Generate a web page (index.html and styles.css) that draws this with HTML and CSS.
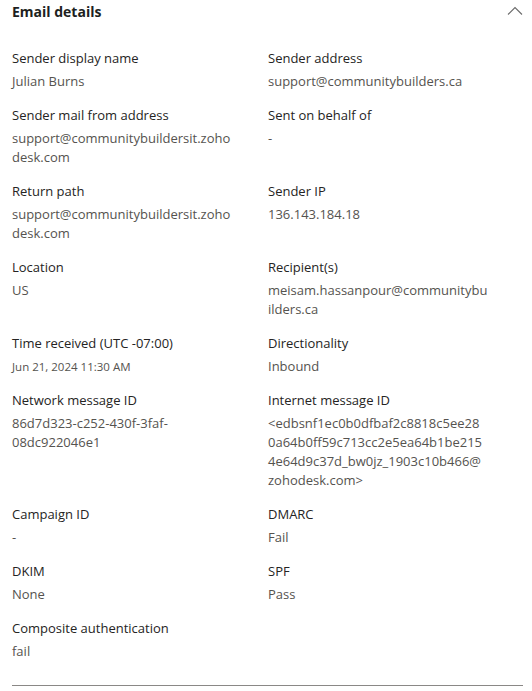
FILE: index.html
```html
<!DOCTYPE html>
<html lang="en">
<head>
<meta charset="utf-8">
<title>Email details</title>
<link rel="stylesheet" href="styles.css">
</head>
<body>
<section class="panel">
  <header class="panel-header">
    <h2 class="panel-title">Email details</h2>
    <button class="collapse-btn" aria-label="Collapse">
      <svg width="16" height="10" viewBox="0 0 16 10"><path d="M1 8.5 L8 1.5 L15 8.5" fill="none" stroke="#6b6b6b" stroke-width="1.1"/></svg>
    </button>
  </header>
  <dl class="details">
    <div class="item"><dt class="label">Sender display name</dt><dd class="value">Julian Burns</dd></div>
    <div class="item"><dt class="label">Sender address</dt><dd class="value">support@communitybuilders.ca</dd></div>
    <div class="item"><dt class="label">Sender mail from address</dt><dd class="value">support@communitybuildersit.zoho<br>desk.com</dd></div>
    <div class="item"><dt class="label">Sent on behalf of</dt><dd class="value">-</dd></div>
    <div class="item"><dt class="label">Return path</dt><dd class="value">support@communitybuildersit.zoho<br>desk.com</dd></div>
    <div class="item"><dt class="label">Sender IP</dt><dd class="value">136.143.184.18</dd></div>
    <div class="item"><dt class="label">Location</dt><dd class="value">US</dd></div>
    <div class="item"><dt class="label">Recipient(s)</dt><dd class="value">meisam.hassanpour@communitybu<br>ilders.ca</dd></div>
    <div class="item"><dt class="label">Time received (UTC -07:00)</dt><dd class="value value-small">Jun 21, 2024 11:30 AM</dd></div>
    <div class="item"><dt class="label">Directionality</dt><dd class="value">Inbound</dd></div>
    <div class="item"><dt class="label">Network message ID</dt><dd class="value">86d7d323-c252-430f-3faf-<br>08dc922046e1</dd></div>
    <div class="item"><dt class="label">Internet message ID</dt><dd class="value">&lt;edbsnf1ec0b0dfbaf2c8818c5ee28<br>0a64b0ff59c713cc2e5ea64b1be215<br>4e64d9c37d_bw0jz_1903c10b466@<br>zohodesk.com&gt;</dd></div>
    <div class="item"><dt class="label">Campaign ID</dt><dd class="value">-</dd></div>
    <div class="item"><dt class="label">DMARC</dt><dd class="value">Fail</dd></div>
    <div class="item"><dt class="label">DKIM</dt><dd class="value">None</dd></div>
    <div class="item"><dt class="label">SPF</dt><dd class="value">Pass</dd></div>
    <div class="item"><dt class="label">Composite authentication</dt><dd class="value">fail</dd></div>
  </dl>
  <hr class="divider">
</section>
</body>
</html>
```
FILE: styles.css
```css
* { box-sizing: border-box; }
html, body { margin: 0; padding: 0; background: #ffffff; }
body {
  font-family: "Open Sans", "Noto Sans", "Liberation Sans", sans-serif;
  color: #323130;
}
.panel { padding: 0 9px 0 12px; }
.panel-header {
  display: flex;
  align-items: center;
  justify-content: space-between;
  height: 24px;
}
.panel-title {
  margin: 0;
  font-size: 14px;
  font-weight: 700;
  line-height: 24px;
  color: #201f1e;
}
.collapse-btn {
  border: 0;
  background: none;
  padding: 0;
  margin: 0 0 2px 0;
  width: 16px;
  height: 10px;
  display: flex;
}
.details {
  margin: 24px 0 0 0;
  display: grid;
  grid-template-columns: 232px 232px;
  column-gap: 24px;
  row-gap: 14px;
}
.item { margin: 0; }
.label {
  margin: 0;
  font-size: 13px;
  font-weight: 500;
  line-height: 20px;
  color: #252423;
}
.value {
  margin: 4px 0 0 0;
  font-size: 13px;
  font-weight: 400;
  line-height: 19px;
  color: #55534f;
}
.value-small { font-size: 11.5px; }
.divider {
  margin: 24px 0 0 0;
  border: 0;
  border-top: 1px solid #8a8886;
  height: 0;
}
```
